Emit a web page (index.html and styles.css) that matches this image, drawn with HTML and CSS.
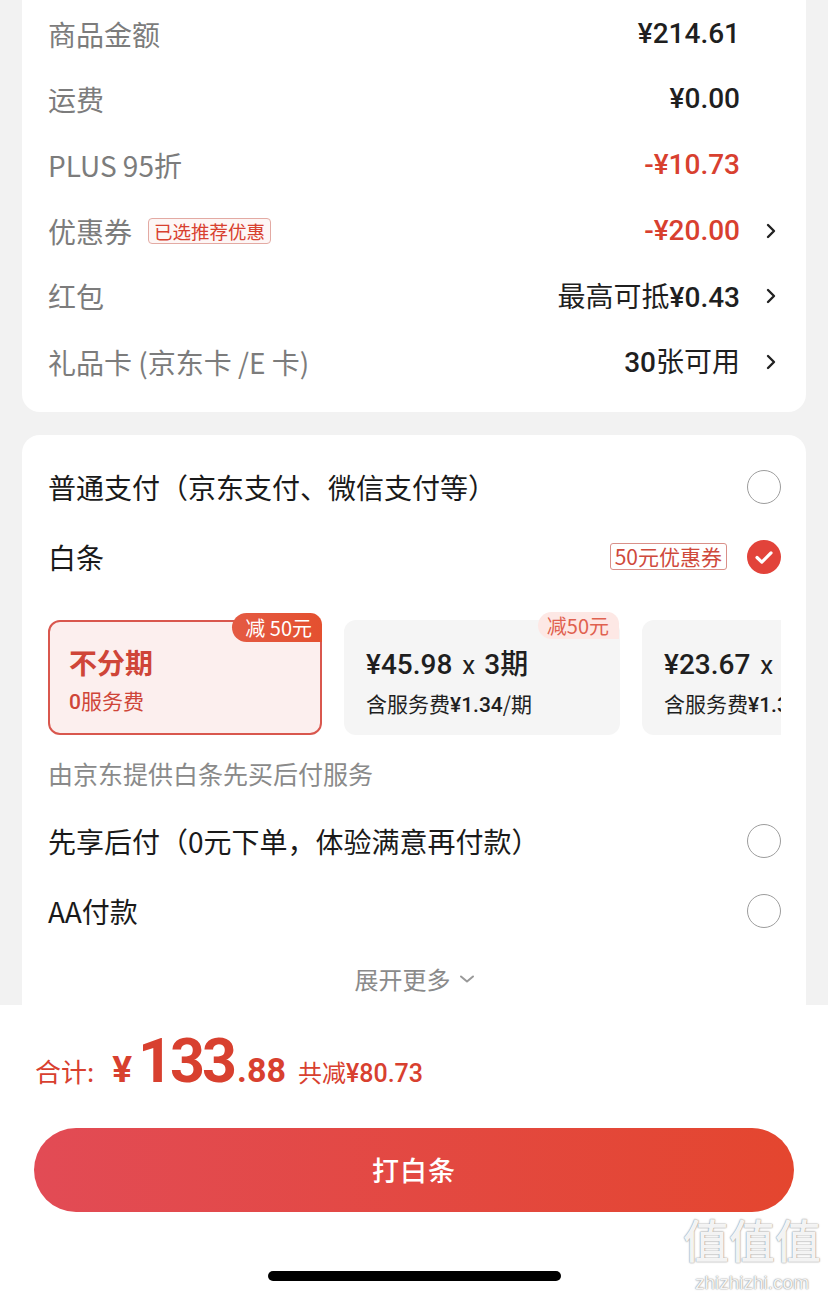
FILE: index.html
```html
<!DOCTYPE html>
<html lang="zh-CN">
<head>
<meta charset="utf-8">
<title>确认订单</title>
<link rel="stylesheet" href="styles.css">
</head>
<body>
<div class="page">
  <section class="card summary">
    <div class="row"><span class="label">商品金额</span><span class="value">¥214.61</span><span class="arrow"></span></div>
    <div class="row"><span class="label">运费</span><span class="value">¥0.00</span><span class="arrow"></span></div>
    <div class="row"><span class="label">PLUS 95折</span><span class="value red">-¥10.73</span><span class="arrow"></span></div>
    <div class="row"><span class="label">优惠券</span><span class="tag-sel">已选推荐优惠</span><span class="value red">-¥20.00</span><span class="arrow"><svg width="10" height="16" viewBox="0 0 10 16"><path d="M2 2l6 6-6 6" fill="none" stroke="#222" stroke-width="2.4" stroke-linecap="round" stroke-linejoin="round"/></svg></span></div>
    <div class="row"><span class="label">红包</span><span class="value"><span class="cjk">最高可抵</span>¥0.43</span><span class="arrow"><svg width="10" height="16" viewBox="0 0 10 16"><path d="M2 2l6 6-6 6" fill="none" stroke="#222" stroke-width="2.4" stroke-linecap="round" stroke-linejoin="round"/></svg></span></div>
    <div class="row"><span class="label">礼品卡 (京东卡 /E 卡)</span><span class="value">30<span class="cjk">张可用</span></span><span class="arrow"><svg width="10" height="16" viewBox="0 0 10 16"><path d="M2 2l6 6-6 6" fill="none" stroke="#222" stroke-width="2.4" stroke-linecap="round" stroke-linejoin="round"/></svg></span></div>
  </section>

  <section class="card pay">
    <div class="opt"><span class="opt-label">普通支付（京东支付、微信支付等）</span><span class="radio"></span></div>
    <div class="opt"><span class="opt-label">白条</span><span class="tag-coupon">50元优惠券</span><span class="radio checked"><svg width="34" height="34" viewBox="0 0 34 34"><path d="M10 17.5l4.8 4.6 9.2-9.2" fill="none" stroke="#fff" stroke-width="3.2" stroke-linecap="round" stroke-linejoin="round"/></svg></span></div>
    <div class="plans">
      <div class="plan selected">
        <span class="badge hot">减 50元</span>
        <div class="plan-main">不分期</div>
        <div class="plan-sub"><span class="num">0</span>服务费</div>
      </div>
      <div class="plan">
        <span class="badge soft">减50元</span>
        <div class="plan-main"><span class="num">¥45.98</span><span class="x">x</span><span class="num">3</span>期</div>
        <div class="plan-sub">含服务费<span class="num">¥1.34</span>/期</div>
      </div>
      <div class="plan">
        <div class="plan-main"><span class="num">¥23.67</span><span class="x">x</span><span class="num">6</span>期</div>
        <div class="plan-sub">含服务费<span class="num">¥1.34</span>/期</div>
      </div>
    </div>
    <div class="note">由京东提供白条先买后付服务</div>
    <div class="opt"><span class="opt-label">先享后付（0元下单，体验满意再付款）</span><span class="radio"></span></div>
    <div class="opt"><span class="opt-label">AA付款</span><span class="radio"></span></div>
    <div class="more">展开更多<svg width="16" height="10" viewBox="0 0 16 10"><path d="M2 2.5l6 5 6-5" fill="none" stroke="#999" stroke-width="2" stroke-linecap="round" stroke-linejoin="round"/></svg></div>
  </section>

  <footer class="bar">
    <div class="total">
      <span class="t-label">合计:</span>
      <span class="t-yen">¥</span>
      <span class="t-int">133</span>
      <span class="t-dec">.88</span>
      <span class="t-save">共减<span class="num">¥80.73</span></span>
    </div>
    <button class="submit">打白条</button>
    <div class="home"></div>
  </footer>

  <div class="watermark">
    <div class="wm-big">值值值</div>
    <div class="wm-small">zhizhizhi.com</div>
  </div>
</div>
</body>
</html>
```

FILE: styles.css
```css
* { box-sizing: border-box; }
html, body { margin: 0; padding: 0; }
body {
  background: #f2f2f2;
  font-family: "Noto Sans CJK SC", "Noto Sans", sans-serif;
  color: #1a1a1a;
}
.page {
  position: relative;
  width: 828px;
  height: 1299px;
  overflow: hidden;
}
.card {
  background: #fff;
  margin: 0 22px;
}
.summary {
  padding: 1px 30px 17px 26px;
  border-radius: 0 0 18px 18px;
}
.row {
  height: 65.6px;
  display: flex;
  align-items: center;
}
.label {
  flex: 0 0 auto;
  font-size: 28px;
  line-height: 36px;
  color: #7c7c7c;
}
.row .value { margin-left: auto; }
.tag-sel {
  margin-left: 16px;
  height: 26px;
  padding: 0 5px;
  border: 1px solid #e3aaa3;
  border-radius: 4px;
  background: #fdf6f5;
  color: #d8402f;
  font-size: 18.5px;
  line-height: 24px;
}
.value {
  font-family: "Roboto", "Noto Sans CJK SC", sans-serif;
  font-weight: 500;
  font-size: 28px;
  line-height: 36px;
  color: #1f1f1f;
}
.value .cjk {
  font-family: "Noto Sans CJK SC", sans-serif;
  font-weight: 400;
}
.value.red { color: #d8402f; }
.arrow {
  width: 36px;
  height: 36px;
  display: flex;
  align-items: center;
  justify-content: flex-end;
}

.pay {
  margin-top: 23px;
  padding: 17px 25px 11px 26px;
  border-radius: 18px 18px 0 0;
}
.opt {
  height: 70px;
  display: flex;
  align-items: center;
}
.opt-label {
  font-size: 28px;
  line-height: 36px;
  color: #1a1a1a;
  margin-right: auto;
}
.tag-coupon {
  height: 27px;
  padding: 0 4px;
  border: 1px solid #d99089;
  border-radius: 3px;
  color: #cf4a3c;
  font-size: 21px;
  line-height: 25px;
  margin-right: 20px;
}
.radio {
  width: 34px;
  height: 34px;
  border-radius: 50%;
  border: 1.5px solid #9d9d9d;
  flex: none;
}
.radio.checked {
  border: none;
  background: #e2433a;
  display: flex;
}
.plans {
  margin-top: 19px;
  padding-top: 9px;
  display: flex;
  gap: 22px;
  overflow: hidden;
}
.plan {
  position: relative;
  flex: none;
  width: 276px;
  height: 115px;
  border-radius: 12px;
  background: #f5f5f5;
  padding: 24px 16px 0 22px;
  color: #1f1f1f;
}
.plan.selected {
  width: 274px;
  background: #fcefee;
  border: 2px solid #d9574e;
  padding: 22px 16px 0 19px;
  color: #cf4538;
}
.plan-main {
  font-size: 28px;
  line-height: 36px;
  font-weight: 500;
  white-space: nowrap;
}
.plan.selected .plan-main { font-weight: 700; }
.plan-main .num {
  font-family: "Roboto", "Noto Sans CJK SC", sans-serif;
  font-weight: 500;
}
.plan-main .x {
  font-family: "Roboto", sans-serif;
  font-weight: 400;
  font-size: 26px;
  margin: 0 9px 0 10px;
}
.plan-sub {
  margin-top: 6px;
  font-size: 21px;
  line-height: 28px;
  white-space: nowrap;
}
.plan-sub .num {
  font-family: "Roboto", "Noto Sans CJK SC", sans-serif;
  font-weight: 500;
}
.badge {
  position: absolute;
  right: -2px;
  top: -9px;
  height: 29px;
  padding: 0 10px 0 13px;
  font-size: 20px;
  line-height: 29px;
  border-radius: 15px 12px 0 15px;
}
.badge.hot {
  background: linear-gradient(90deg, #e45a43, #e4502f);
  color: #fff;
}
.badge.soft {
  right: 1px;
  top: -8px;
  height: 27px;
  line-height: 27px;
  padding: 0 10px 0 9px;
  background: #fde8e5;
  color: #e0614f;
  border-radius: 14px 12px 0 14px;
}
.note {
  margin-top: 24px;
  font-size: 25px;
  line-height: 28px;
  color: #8a8a8a;
  margin-bottom: 19px;
}
.more {
  margin-top: 18px;
  height: 30px;
  display: flex;
  align-items: center;
  justify-content: center;
  gap: 8px;
  font-size: 24px;
  line-height: 30px;
  color: #8a8a8a;
}

.bar {
  background: #fff;
  height: 294px;
  padding-top: 25px;
}
.total {
  display: flex;
  align-items: baseline;
  padding-left: 35px;
  height: 62px;
  color: #d8402f;
}
.t-label {
  font-size: 26px;
  line-height: 62px;
  margin-right: 18px;
}
.t-yen {
  font-family: "Roboto", sans-serif;
  font-weight: 700;
  font-size: 37px;
  margin-right: 6px;
}
.t-int {
  font-family: "Roboto", sans-serif;
  font-weight: 700;
  font-size: 61px;
  line-height: 62px;
  letter-spacing: -3px;
}
.t-dec {
  font-family: "Roboto", sans-serif;
  font-weight: 700;
  font-size: 34px;
  margin-left: 3px;
}
.t-save {
  font-size: 24px;
  margin-left: 12px;
}
.t-save .num {
  font-family: "Roboto", sans-serif;
  font-weight: 500;
  font-size: 25px;
}
.submit {
  display: block;
  margin: 36px 0 0 34px;
  width: 760px;
  height: 84px;
  border: none;
  border-radius: 42px;
  background: linear-gradient(90deg, #e24b55 0%, #e4462f 100%);
  color: #fff;
  font-family: "Noto Sans CJK SC", sans-serif;
  font-size: 27px;
  font-weight: 500;
  letter-spacing: 1px;
}
.home {
  margin: 59px auto 0;
  width: 293px;
  height: 10px;
  border-radius: 5px;
  background: #000;
}
.watermark {
  position: absolute;
  left: 678px;
  top: 1210px;
  width: 148px;
  text-align: center;
  color: rgba(255,255,255,0.92);
  text-shadow: 0 0 1px #888, 0 0 2px #aaa;
}
.wm-big {
  font-family: "Noto Sans CJK SC", sans-serif;
  font-size: 46px;
  line-height: 56px;
  font-weight: 500;
}
.wm-small {
  margin-top: 6px;
  font-family: "Liberation Sans", sans-serif;
  font-size: 19px;
  line-height: 22px;
}
```
